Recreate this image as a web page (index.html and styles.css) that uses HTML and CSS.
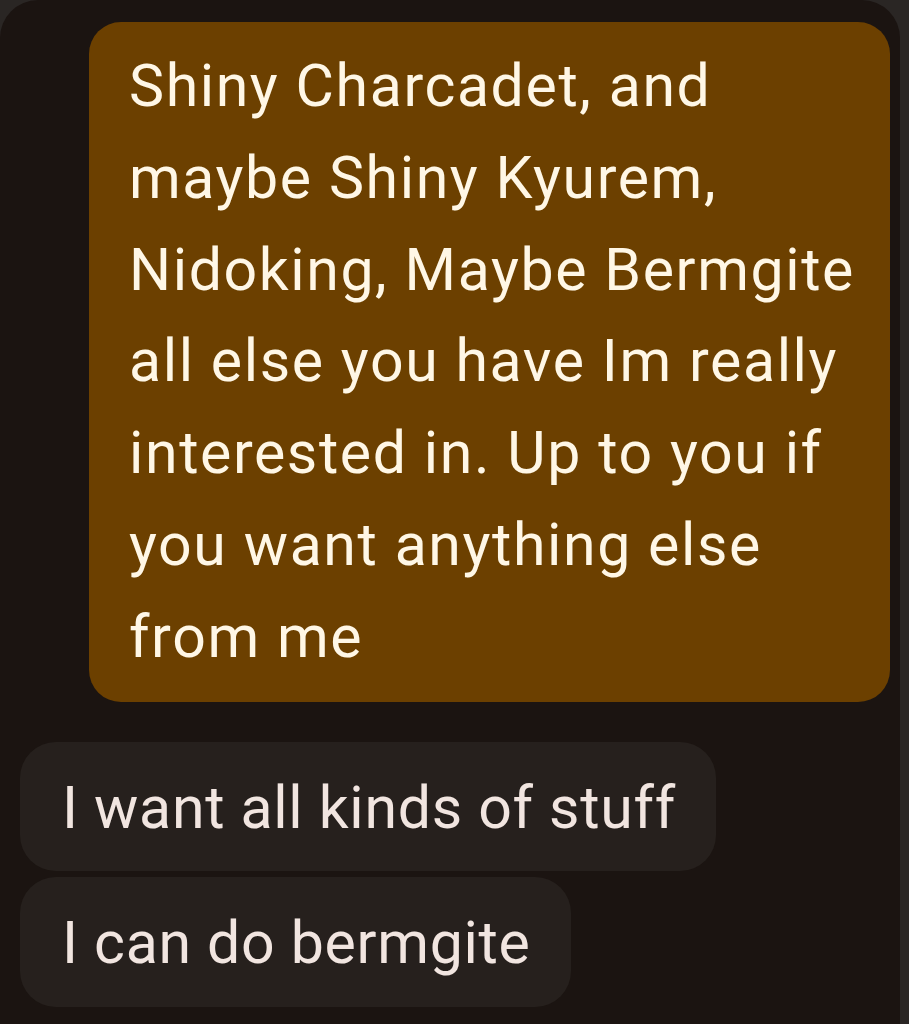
FILE: index.html
```html
<html>
	<head>
		<title>Messages</title>
		<link rel="stylesheet" href="styles.css">
	</head>
	<body>
		<div class="Thread">
			<div class="Row Out">
				<div class="Bubble Sent">Shiny Charcadet, and maybe Shiny Kyurem, Nidoking, Maybe Bermgite all else you have Im really interested in. Up to you if you want anything else from me</div>
			</div>
			<div class="Row In">
				<div class="Bubble Got First">I want all kinds of stuff</div>
				<div class="Bubble Got Last">I can do bermgite</div>
			</div>
		</div>
	</body>
</html>
```

FILE: styles.css
```css
html, body {margin: 0; height: 100%; overflow: hidden; background-color: #2a2624;}

.Thread {
	height: 100%;
	margin-right: 9px;
	background-color: #1b1411;
	border-radius: 38px 38px 0 0;
	padding-top: 22px;
	box-sizing: border-box;
	font-family: Roboto, "Noto Sans", sans-serif;
	font-size: 59px;
	line-height: 91.8px;
	letter-spacing: 1.6px;
}

.Row {
	display: flex;
	flex-direction: column;
}
.Out {
	align-items: flex-end;
	padding-right: 10px;
}
.In {
	align-items: flex-start;
	padding-left: 20px;
	margin-top: 40px;
	gap: 6px;
	letter-spacing: 0.7px;
}

.Bubble {
	box-sizing: border-box;
}
.Sent {
	width: 801px;
	padding: 18px 26px 19px 40px;
	background-color: #6c4000;
	color: #fff7e6;
	border-radius: 32px;
}
.Got {
	padding: 20px 40px 18px 42px;
	background-color: #26201d;
	color: #f1e5e0;
	border-radius: 36px;
}
```
